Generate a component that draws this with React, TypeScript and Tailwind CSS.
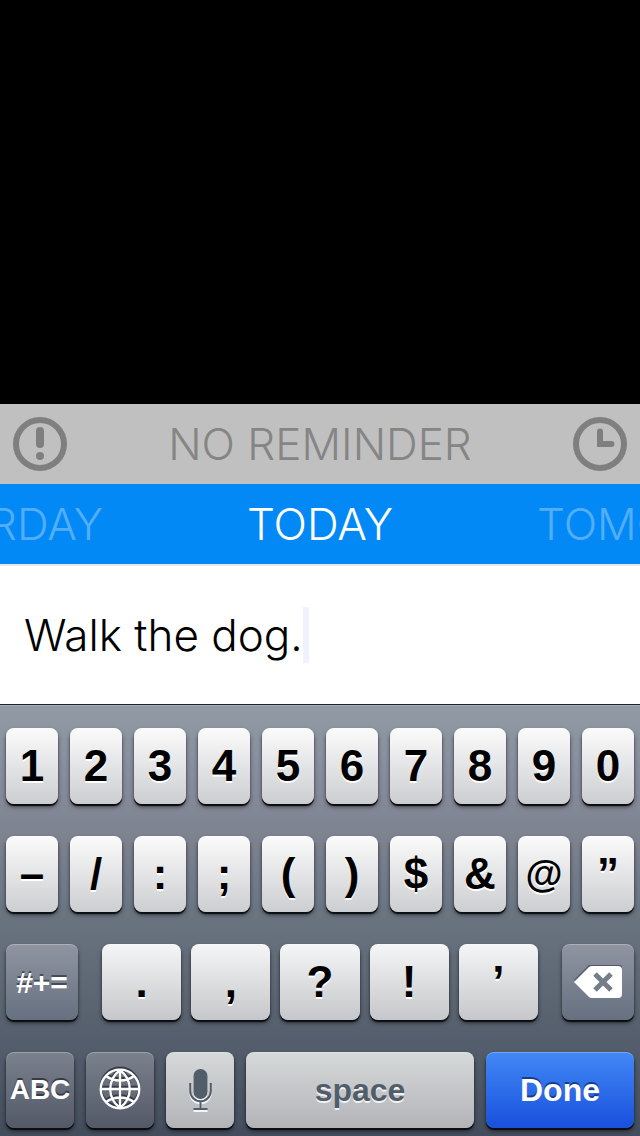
import { useState, type ReactNode } from "react";

const digits = ["1", "2", "3", "4", "5", "6", "7", "8", "9", "0"];
const symbols = ["–", "/", ":", ";", "(", ")", "$", "&", "@", "”"];
const punctuation = [".", ",", "?", "!", "’"];

const tones = {
  light:
    "bg-linear-to-b from-[#fbfbfb] to-[#cdced1] text-black [text-shadow:0_2px_0_#fff]",
  lightMid:
    "bg-linear-to-b from-[#f5f6f6] to-[#c6c7ca] text-black [text-shadow:0_2px_0_#fff]",
  slate:
    "bg-linear-to-b from-[#9095a1] to-[#667080] text-white [text-shadow:0_-2px_0_#454c58]",
  dark: "bg-linear-to-b from-[#7b818d] to-[#535967] text-white [text-shadow:0_-2px_0_#363c47]",
  silver:
    "bg-linear-to-b from-[#d6d9da] to-[#b3b4b8] text-[#525d6a] [text-shadow:0_2px_0_#f2f2f3]",
  blue: "bg-linear-to-b from-[#4388f6] to-[#1a4fdc] text-white [text-shadow:0_-2px_0_#163d8c]",
};

type KeyProps = {
  tone: keyof typeof tones;
  className?: string;
  label?: string;
  onClick?: () => void;
  children: ReactNode;
};

function Key({ tone, className = "", label, onClick, children }: KeyProps) {
  return (
    <button
      type="button"
      aria-label={label}
      onClick={onClick}
      className={`flex h-19 items-center justify-center rounded-lg font-bold shadow-[0_2px_1px_#0b0d10,0_3px_4px_rgba(0,0,0,0.5),inset_0_1px_0_rgba(255,255,255,0.25)] ${tones[tone]} ${className}`}
    >
      {children}
    </button>
  );
}

function AlertIcon() {
  return (
    <svg viewBox="0 0 54 54" className="size-[54px]" fill="none" stroke="#7f7f7f" aria-hidden="true">
      <circle cx="27" cy="27" r="24" strokeWidth="6" />
      <path d="M27 14v13" strokeWidth="8" strokeLinecap="round" />
      <circle cx="27" cy="39" r="4" fill="#7f7f7f" stroke="none" />
    </svg>
  );
}

function ClockIcon() {
  return (
    <svg viewBox="0 0 54 54" className="size-[54px]" fill="none" stroke="#7f7f7f" aria-hidden="true">
      <circle cx="27" cy="27" r="24" strokeWidth="6" />
      <path d="M24 30V14.5a3 3 0 0 1 6 0V24h8.5a3 3 0 0 1 0 6z" fill="#7f7f7f" stroke="none" />
    </svg>
  );
}

function GlobeLines() {
  return (
    <>
      <circle cx="21" cy="21" r="19.3" />
      <path d="M21 1.5v39M1.5 21h39M21 2C8 12 8 30 21 40M21 2c13 10 13 28 0 38M7 8c8 6 20 6 28 0M7 34c8-6 20-6 28 0" />
    </>
  );
}

function GlobeIcon() {
  return (
    <svg viewBox="0 0 42 44" className="h-11 w-[42px] overflow-visible" fill="none" strokeWidth="2.3" aria-hidden="true">
      <g stroke="#363c47" transform="translate(0 -2)">
        <GlobeLines />
      </g>
      <g stroke="#fff">
        <GlobeLines />
      </g>
    </svg>
  );
}

function MicLines() {
  return (
    <>
      <rect x="4.5" y="0" width="14" height="30" rx="7" stroke="none" />
      <path d="M1.2 14v8a10.3 10.3 0 0 0 20.6 0v-8M11.5 32v8M4.5 40h14" fill="none" />
    </>
  );
}

function MicIcon() {
  return (
    <svg viewBox="0 -1 23 44" className="h-11 w-[23px]" strokeWidth="2" aria-hidden="true">
      <g stroke="#f5f5f6" fill="#f5f5f6" transform="translate(0 2)">
        <MicLines />
      </g>
      <g stroke="#525d6a" fill="#525d6a">
        <MicLines />
      </g>
    </svg>
  );
}

function DeleteIcon() {
  return (
    <svg viewBox="0 1 48 34" className="h-[34px] w-12" aria-hidden="true">
      <path d="M0 16 15 1q1-1 3-1h26q4 0 4 4v24q0 4-4 4H18q-2 0-3-1z" fill="#515966" />
      <path d="M0 18 15 3q1-1 3-1h26q4 0 4 4v24q0 4-4 4H18q-2 0-3-1z" fill="#fff" />
      <path d="m21 10 16 16M37 10 21 26" stroke="#757d8a" strokeWidth="5" />
    </svg>
  );
}

export default function App() {
  const [task, setTask] = useState("Walk the dog.");
  const type = (char: string) => setTask((text) => text + char);

  return (
    <div className="flex min-h-screen flex-col bg-black font-['Liberation_Sans',Arial,sans-serif]">
      <main className="mt-auto">
        <div className="flex h-20 items-center justify-between bg-[#c0c0c0] px-[13px] font-['Inter',sans-serif] text-[44px] font-light text-[#858585]">
          <button type="button" aria-label="Priority">
            <AlertIcon />
          </button>
          <button type="button">NO REMINDER</button>
          <button type="button" aria-label="Set reminder time">
            <ClockIcon />
          </button>
        </div>

        <nav
          aria-label="Day"
          className="flex h-20 items-center gap-36 overflow-hidden bg-[#0389f6] font-['Inter',sans-serif] text-[44px] font-light text-[#52aef9]"
        >
          <div className="flex min-w-0 flex-1 basis-0 justify-end">
            <button type="button">YESTERDAY</button>
          </div>
          <button type="button" aria-current="date" className="text-white">
            TODAY
          </button>
          <div className="flex min-w-0 flex-1 basis-0">
            <button type="button">TOMORROW</button>
          </div>
        </nav>

        <div className="flex h-35 items-center border-t-2 border-[#e8e8e8] bg-white px-6">
          <input
            type="text"
            aria-label="Task"
            value={task}
            onChange={(event) => setTask(event.target.value)}
            className="max-w-full bg-transparent font-['Inter',sans-serif] text-[44px] leading-[56px] font-light text-black caret-transparent outline-none [field-sizing:content]"
          />
          <span className="h-14 w-[6px] bg-[#f0f2fe]" />
        </div>

        <section
          aria-label="Keyboard"
          className="flex flex-col gap-8 border-t border-[#20242a] bg-[linear-gradient(#929aa6,#7e8390_30%,#6b7581_48%,#444d5c)] px-[6px] pt-[23px] pb-2 shadow-[inset_0_1px_0_#a9afb9]"
        >
          <div className="grid grid-cols-10 gap-3 text-[44px]">
            {digits.map((char) => (
              <Key key={char} tone="light" onClick={() => type(char)}>
                {char}
              </Key>
            ))}
          </div>
          <div className="grid grid-cols-10 gap-3 text-[44px]">
            {symbols.map((char) => (
              <Key
                key={char}
                tone="light"
                className={char === "@" ? "text-[38px]" : ""}
                onClick={() => type(char)}
              >
                {char}
              </Key>
            ))}
          </div>
          <div className="flex gap-6 text-[44px]">
            <Key tone="slate" className="w-18 text-[30px]">
              #+=
            </Key>
            <div className="grid flex-1 grid-cols-5 gap-[10px]">
              {punctuation.map((char) => (
                <Key key={char} tone="lightMid" onClick={() => type(char)}>
                  {char}
                </Key>
              ))}
            </div>
            <Key
              tone="slate"
              className="w-18"
              label="Delete"
              onClick={() => setTask((text) => text.slice(0, -1))}
            >
              <DeleteIcon />
            </Key>
          </div>
          <div className="flex gap-3 text-[32px]">
            <Key tone="dark" className="w-17 text-[28px]">
              ABC
            </Key>
            <Key tone="dark" className="w-17" label="Next keyboard">
              <GlobeIcon />
            </Key>
            <Key tone="silver" className="w-17" label="Dictate">
              <MicIcon />
            </Key>
            <Key tone="silver" className="flex-1" onClick={() => type(" ")}>
              space
            </Key>
            <Key tone="blue" className="w-37">
              Done
            </Key>
          </div>
        </section>
      </main>
    </div>
  );
}
